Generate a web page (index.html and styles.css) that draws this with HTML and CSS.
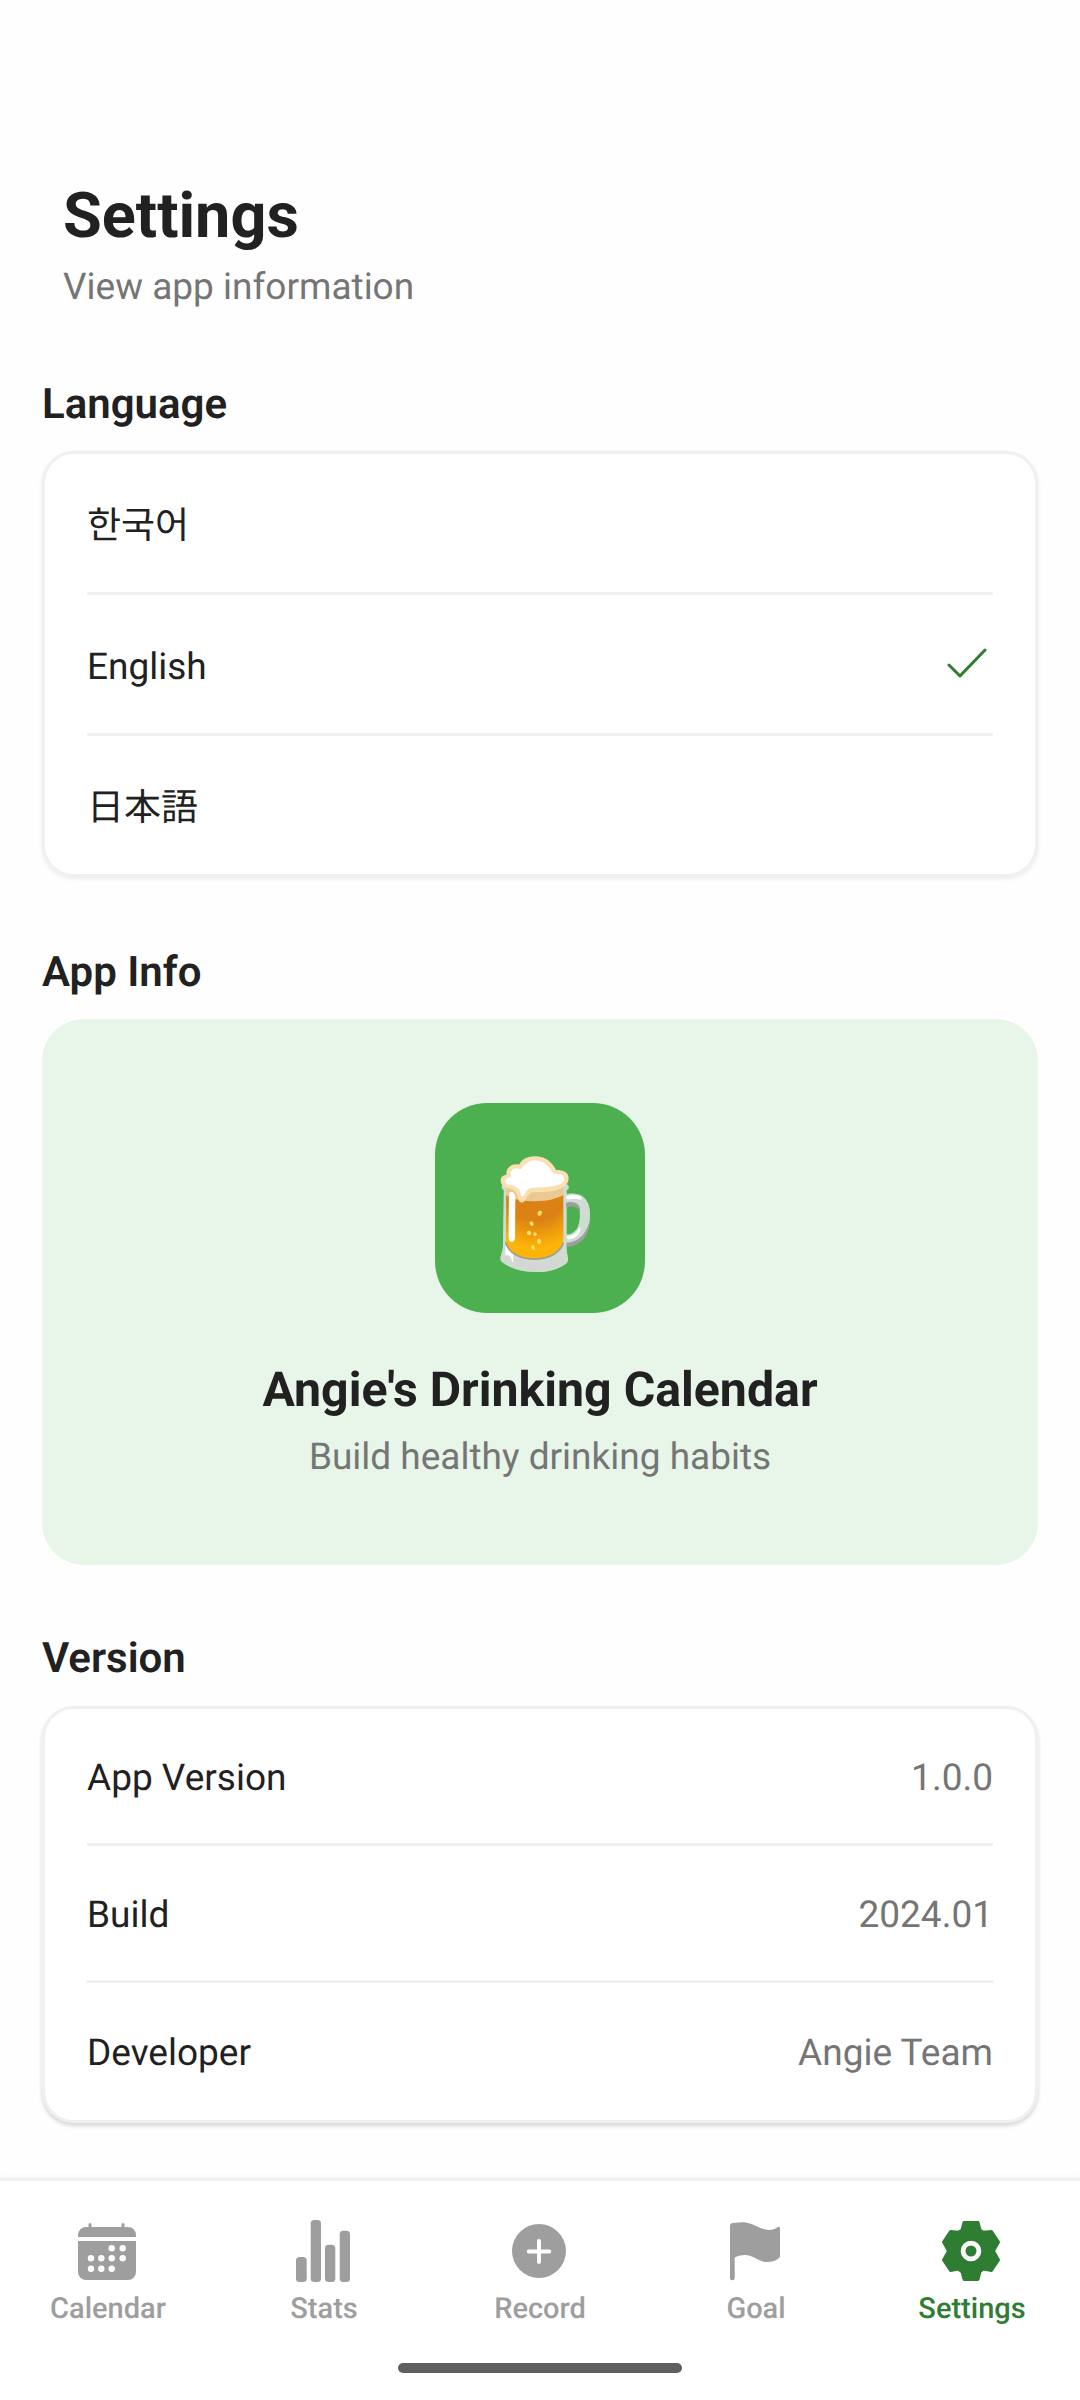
FILE: index.html
```html
<!DOCTYPE html>
<html lang="en">

<head>
    <meta charset="UTF-8">
    <meta name="viewport" content="width=device-width, initial-scale=1.0">
    <title>Settings</title>
    <link rel="stylesheet" href="styles.css">
</head>

<body>
    <div class="screen">
        <main class="content">
            <header class="pageHeader">
                <h1 class="pageTitle">Settings</h1>
                <p class="pageSub">View app information</p>
            </header>

            <h2 class="sectionTitle">Language</h2>
            <div class="card">
                <div class="langRow"><span class="rowLabel">한국어</span></div>
                <div class="langRow">
                    <span class="rowLabel">English</span>
                    <svg class="checkIcon" viewBox="0 0 40 32" fill="none" stroke="#2e7d32" stroke-width="3" stroke-linecap="round" stroke-linejoin="round">
                        <path d="M2 17 L13 28 L38 2" />
                    </svg>
                </div>
                <div class="langRow"><span class="rowLabel">日本語</span></div>
            </div>

            <h2 class="sectionTitle appInfoTitle">App Info</h2>
            <div class="appCard">
                <div class="appIcon">🍺</div>
                <div class="appName">Angie's Drinking Calendar</div>
                <div class="appTag">Build healthy drinking habits</div>
            </div>

            <h2 class="sectionTitle versionTitle">Version</h2>
            <div class="card versionCard">
                <div class="infoRow"><span class="rowLabel">App Version</span><span class="rowValue">1.0.0</span></div>
                <div class="infoRow"><span class="rowLabel">Build</span><span class="rowValue">2024.01</span></div>
                <div class="infoRow"><span class="rowLabel">Developer</span><span class="rowValue">Angie Team</span></div>
            </div>
        </main>

        <nav class="tabBar">
            <div class="tab">
                <svg class="tabIcon" viewBox="0 0 66 66" fill="#9e9e9e">
                    <path d="M13.500 9V6.500a1.500 1.500 0 0 1 3 0V9h30V6.500a1.500 1.500 0 0 1 3 0V9H53a8 8 0 0 1 8 8v2H3v-2a8 8 0 0 1 8-8z" />
                    <path d="M3 23h58v31a8 8 0 0 1-8 8H11a8 8 0 0 1-8-8z" />
                    <g fill="#fff">
                        <circle cx="36.700" cy="30.300" r="3.200" /><circle cx="47.700" cy="30.300" r="3.200" />
                        <circle cx="16" cy="40.300" r="3.200" /><circle cx="26.300" cy="40.300" r="3.200" /><circle cx="36.700" cy="40.300" r="3.200" /><circle cx="47.700" cy="40.300" r="3.200" />
                        <circle cx="16" cy="50.700" r="3.200" /><circle cx="26.300" cy="50.700" r="3.200" /><circle cx="36.700" cy="50.700" r="3.200" />
                    </g>
                </svg>
                <span class="tabLabel">Calendar</span>
            </div>
            <div class="tab">
                <svg class="tabIcon" viewBox="0 0 66 66" fill="#9e9e9e">
                    <rect x="5" y="39" width="10.700" height="25" rx="3.500" />
                    <rect x="19.700" y="2" width="10.300" height="62" rx="3.500" />
                    <rect x="34" y="26.700" width="10.300" height="37.300" rx="3.500" />
                    <rect x="48.700" y="12.700" width="10.300" height="51.300" rx="3.500" />
                </svg>
                <span class="tabLabel">Stats</span>
            </div>
            <div class="tab">
                <svg class="tabIcon" viewBox="0 0 66 66">
                    <circle cx="32" cy="33" r="27" fill="#9e9e9e" />
                    <path d="M32 23v21M21.700 33.500h20.600" stroke="#fff" stroke-width="4" stroke-linecap="round" />
                </svg>
                <span class="tabLabel">Record</span>
            </div>
            <div class="tab">
                <svg class="tabIcon" viewBox="0 0 66 66" fill="#9e9e9e">
                    <path d="M7 8a3 3 0 0 1 3-3C15 4.500 20 4 24 4.700 32 6 38 12 46 12c4 0 7-2 9-3 1.500-.5 2 .5 2 2v27c0 1.500-1 2-2 3-3 2-6 3-11 3-8 0-14-7-22-7-4 0-8 1-10.300 2.500V60a2.350 2.350 0 0 1-4.700 0z" />
                </svg>
                <span class="tabLabel">Goal</span>
            </div>
            <div class="tab active">
                <svg class="tabIcon" viewBox="0 0 66 66">
                    <path fill="#2e7d32" stroke="#2e7d32" stroke-width="3" stroke-linejoin="round" d="M25 4.500H39L41 12 44.300 14.300 52.500 13.500 59.500 24 54.500 33 59.500 42 52.500 52.500 44.300 51 41 53.700 39 61.500H25L23 53.700 19.300 51 11.500 52.500 4.500 42 9.500 33 4.500 24 11.500 13.500 19.300 14.300 23 12z" />
                    <circle cx="32" cy="33" r="7.900" fill="none" stroke="#fff" stroke-width="4.800" />
                </svg>
                <span class="tabLabel">Settings</span>
            </div>
        </nav>
        <div class="homeBar"></div>
    </div>
</body>

</html>
```

FILE: styles.css
```css
* {
    margin: 0;
    padding: 0;
    box-sizing: border-box;
}

body {
    width: 1080px;
    height: 2400px;
    background-color: #fff;
    font-family: Roboto, "Noto Sans CJK KR", sans-serif;
    color: #212121;
    text-rendering: geometricPrecision;
    overflow: hidden;
}

.screen {
    height: 2400px;
    display: flex;
    flex-direction: column;
    background-color: #fefefe;
}

.content {
    flex: 1;
    padding: 0 42px;
}

.pageHeader {
    padding: 176px 21px 0;
}

.pageTitle {
    font-size: 63px;
    line-height: 82px;
    font-weight: 700;
}

.pageSub {
    font-size: 37px;
    line-height: 50px;
    color: #757575;
    margin-top: 5px;
}

.sectionTitle {
    font-size: 42px;
    line-height: 54px;
    font-weight: 600;
    margin-top: 65px;
    margin-bottom: 19px;
}

.appInfoTitle {
    margin-top: 69px;
}

.versionTitle {
    margin-top: 67px;
    margin-bottom: 20px;
}

.card {
    background-color: #fff;
    border: 3px solid #f0f0f0;
    border-radius: 32px;
    box-shadow: 0 2px 4px rgba(0, 0, 0, 0.08);
    padding: 0 42px;
}

.versionCard {
    box-shadow: 0 3px 4px rgba(0, 0, 0, 0.16);
}

.langRow {
    height: 141px;
    display: flex;
    align-items: center;
    justify-content: space-between;
    border-bottom: 3px solid #f0f0f0;
}

.infoRow {
    height: 137px;
    display: flex;
    align-items: center;
    justify-content: space-between;
    border-bottom: 3px solid #f0f0f0;
}

.langRow:last-child {
    height: 138px;
    border-bottom: none;
}

.infoRow:last-child {
    border-bottom: none;
}

.rowLabel,
.rowValue {
    font-size: 37px;
    line-height: 50px;
    padding-top: 5px;
}

.langRow .rowLabel {
    padding-top: 7px;
}

.rowValue {
    color: #757575;
}

.checkIcon {
    width: 40px;
    height: 32px;
    margin-right: 6px;
}

.appCard {
    background-color: #e8f5e9;
    border-radius: 42px;
    padding: 84px 42px 0;
    height: 546px;
    display: flex;
    flex-direction: column;
    align-items: center;
}

.appIcon {
    width: 210px;
    height: 210px;
    padding-top: 12px;
    border-radius: 52px;
    background-color: #4caf50;
    display: flex;
    align-items: center;
    justify-content: center;
    font-family: "Noto Color Emoji", sans-serif;
    font-size: 105px;
}

.appName {
    font-size: 48.250px;
    line-height: 62px;
    font-weight: 700;
    margin-top: 46px;
}

.appTag {
    font-size: 37px;
    line-height: 50px;
    color: #757575;
    margin-top: 12px;
}

.tabBar {
    height: 150px;
    border-top: 3px solid #f0f0f0;
    box-shadow: 0 -2px 4px rgba(0, 0, 0, 0.03);
    display: grid;
    grid-template-columns: repeat(5, 216px);
    padding-top: 37px;
    background-color: #fff;
}

.tab {
    display: flex;
    flex-direction: column;
    align-items: center;
    color: #9e9e9e;
}

.tab.active {
    color: #2e7d32;
}

.tabIcon {
    width: 66px;
    height: 66px;
}

.tabLabel {
    font-size: 29px;
    line-height: 36px;
    font-weight: 500;
    margin-top: 7px;
}

.homeBar {
    height: 72px;
    background-color: #fff;
    display: flex;
    justify-content: center;
}

.homeBar::after {
    content: "";
    width: 284px;
    height: 10px;
    border-radius: 5px;
    background-color: #5f5f5f;
    margin-top: 35px;
}
```
